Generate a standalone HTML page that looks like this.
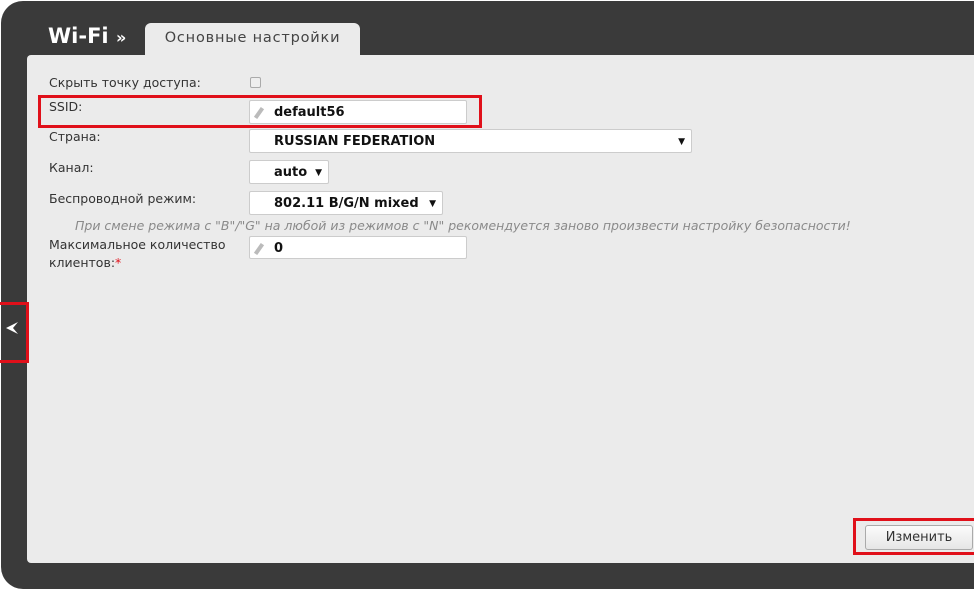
<!DOCTYPE html>
<html><head><meta charset="utf-8"><style>
*{margin:0;padding:0;box-sizing:border-box}
body{width:974px;height:590px;background:#fff;position:relative;overflow:hidden;font-family:"DejaVu Sans","Liberation Sans",sans-serif;font-size:12.5px;color:#333}
.frame{position:absolute;left:1px;top:1px;width:1000px;height:588px;background:#3a3a3a;border-radius:22px}
.panel{position:absolute;left:27px;top:55px;width:960px;height:508px;background:#ebebeb;border-radius:4px 0 0 4px}
.tab{position:absolute;left:145px;top:23px;width:215px;height:34px;background:#ebebeb;border-radius:6px 6px 0 0;text-align:center;line-height:30px;font-size:14.5px;color:#444;letter-spacing:.8px}
.wifi{position:absolute;left:48px;top:24px;color:#fff;font-weight:bold;font-size:21px}
.wifi span{font-size:16px}
.lbl{position:absolute;left:49px}
.box{position:absolute;background:#fff;border:1px solid #ccc;border-radius:2px;font-weight:bold;font-size:13px;color:#111;line-height:24px;padding-left:24px}
.arr{position:absolute;right:6px;top:0;font-size:9px}
.red{position:absolute;border:3px solid #e0101a}
.pen{position:absolute;left:7px;top:6px;width:4px;height:12px;background:#bbb;transform:rotate(35deg)}
</style></head><body>
<div class="frame"></div>
<div class="panel"></div>
<div class="tab">Основные настройки</div>
<div class="wifi">Wi-Fi <span>»</span></div>
<div class="lbl" style="top:75px">Скрыть точку доступа:</div>
<div style="position:absolute;left:250px;top:77px;width:11px;height:11px;border:1px solid #aaa;border-radius:2px;background:#eee"></div>
<div class="lbl" style="top:99px">SSID:</div>
<div class="box" style="left:249px;top:100px;width:218px;height:24px"><i class="pen"></i>default56</div>
<div class="lbl" style="top:129px">Страна:</div>
<div class="box" style="left:249px;top:129px;width:443px;height:24px">RUSSIAN FEDERATION<span class="arr">▼</span></div>
<div class="lbl" style="top:160px">Канал:</div>
<div class="box" style="left:249px;top:160px;width:80px;height:24px">auto<span class="arr">▼</span></div>
<div class="lbl" style="top:191px">Беспроводной режим:</div>
<div class="box" style="left:249px;top:191px;width:194px;height:24px">802.11 B/G/N mixed<span class="arr">▼</span></div>
<div style="position:absolute;left:75px;top:218px;font-style:italic;color:#8a8a8a;font-size:12.5px">При смене режима с "B"/"G" на любой из режимов с "N" рекомендуется заново произвести настройку безопасности!</div>
<div class="lbl" style="top:236px;line-height:18px">Максимальное количество<br>клиентов:<span style="color:#e0101a">*</span></div>
<div class="box" style="left:249px;top:236px;width:218px;height:23px"><i class="pen"></i>0</div>
<div class="red" style="left:38px;top:95px;width:444px;height:33px"></div>
<div class="red" style="left:-3px;top:302px;width:32px;height:61px"></div>
<svg style="position:absolute;left:5px;top:321px" width="14" height="14" viewBox="0 0 14 14"><path d="M1 7 L13 1 L8 7 L13 13 Z" fill="#fff"/></svg>
<div style="position:absolute;left:865px;top:525px;width:108px;height:25px;background:linear-gradient(#fbfbfb,#e6e6e6);border:1px solid #aaa;border-radius:3px;text-align:center;line-height:23px;font-size:13px;color:#333">Изменить</div>
<div class="red" style="left:853px;top:518px;width:124px;height:37px"></div>
</body></html>
